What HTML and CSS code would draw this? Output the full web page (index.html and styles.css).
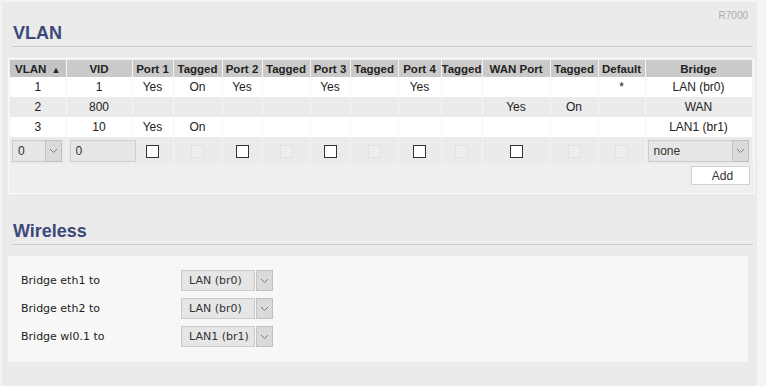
FILE: index.html
```html
<!DOCTYPE html>
<html lang="en">
<head>
    <meta charset="UTF-8">
    <title>VLAN</title>
    <link rel="stylesheet" href="styles.css">
</head>
<body>
    <div class="page">
        <div class="model">R7000</div>

        <h2 class="section-title">VLAN</h2>
        <div class="vlan-box">
            <table class="vlan-table">
                <colgroup>
                    <col style="width:56px"><col style="width:66px"><col style="width:41px"><col style="width:49px">
                    <col style="width:40px"><col style="width:48px"><col style="width:40px"><col style="width:48px">
                    <col style="width:43px"><col style="width:41px"><col style="width:68px"><col style="width:48px">
                    <col style="width:47px"><col style="width:107px">
                </colgroup>
                <thead>
                    <tr>
                        <th class="sorted">VLAN <span class="sort-arrow">&#9650;</span></th>
                        <th>VID</th>
                        <th>Port 1</th>
                        <th>Tagged</th>
                        <th>Port 2</th>
                        <th>Tagged</th>
                        <th>Port 3</th>
                        <th>Tagged</th>
                        <th>Port 4</th>
                        <th>Tagged</th>
                        <th>WAN Port</th>
                        <th>Tagged</th>
                        <th>Default</th>
                        <th>Bridge</th>
                    </tr>
                </thead>
                <tbody>
                    <tr>
                        <td>1</td><td>1</td><td>Yes</td><td>On</td><td>Yes</td><td></td><td>Yes</td><td></td>
                        <td>Yes</td><td></td><td></td><td></td><td>*</td><td>LAN (br0)</td>
                    </tr>
                    <tr class="alt">
                        <td>2</td><td>800</td><td></td><td></td><td></td><td></td><td></td><td></td>
                        <td></td><td></td><td>Yes</td><td>On</td><td></td><td>WAN</td>
                    </tr>
                    <tr>
                        <td>3</td><td>10</td><td>Yes</td><td>On</td><td></td><td></td><td></td><td></td>
                        <td></td><td></td><td></td><td></td><td></td><td>LAN1 (br1)</td>
                    </tr>
                    <tr class="edit-row">
                        <td class="left">
                            <span class="dropdown vlan-select">
                                <span class="dropdown-value">0</span>
                                <span class="dropdown-arrow"><svg width="9" height="6" viewBox="0 0 9 6"><path d="M1 1 L4.5 4.5 L8 1" fill="none" stroke="#7a7a7a" stroke-width="1"/></svg></span>
                            </span>
                        </td>
                        <td class="left"><input class="vid-input" type="text" value="0"></td>
                        <td><input type="checkbox" class="check"></td>
                        <td><input type="checkbox" class="check" disabled></td>
                        <td><input type="checkbox" class="check"></td>
                        <td><input type="checkbox" class="check" disabled></td>
                        <td><input type="checkbox" class="check"></td>
                        <td><input type="checkbox" class="check" disabled></td>
                        <td><input type="checkbox" class="check"></td>
                        <td><input type="checkbox" class="check" disabled></td>
                        <td><input type="checkbox" class="check"></td>
                        <td><input type="checkbox" class="check" disabled></td>
                        <td><input type="checkbox" class="check" disabled></td>
                        <td class="left">
                            <span class="dropdown bridge-select">
                                <span class="dropdown-value">none</span>
                                <span class="dropdown-arrow"><svg width="9" height="6" viewBox="0 0 9 6"><path d="M1 1 L4.5 4.5 L8 1" fill="none" stroke="#7a7a7a" stroke-width="1"/></svg></span>
                            </span>
                        </td>
                    </tr>
                </tbody>
            </table>
            <div class="table-footer">
                <button class="add-btn">Add</button>
            </div>
        </div>

        <h2 class="section-title wireless-title">Wireless</h2>
        <div class="wireless-box">
            <div class="field">
                <label>Bridge eth1 to</label>
                <span class="dropdown wl-select">
                    <span class="dropdown-value">LAN (br0)</span>
                    <span class="dropdown-arrow"><svg width="9" height="6" viewBox="0 0 9 6"><path d="M1 1 L4.5 4.5 L8 1" fill="none" stroke="#7a7a7a" stroke-width="1"/></svg></span>
                </span>
            </div>
            <div class="field">
                <label>Bridge eth2 to</label>
                <span class="dropdown wl-select">
                    <span class="dropdown-value">LAN (br0)</span>
                    <span class="dropdown-arrow"><svg width="9" height="6" viewBox="0 0 9 6"><path d="M1 1 L4.5 4.5 L8 1" fill="none" stroke="#7a7a7a" stroke-width="1"/></svg></span>
                </span>
            </div>
            <div class="field">
                <label>Bridge wl0.1 to</label>
                <span class="dropdown wl-select">
                    <span class="dropdown-value">LAN1 (br1)</span>
                    <span class="dropdown-arrow"><svg width="9" height="6" viewBox="0 0 9 6"><path d="M1 1 L4.5 4.5 L8 1" fill="none" stroke="#7a7a7a" stroke-width="1"/></svg></span>
                </span>
            </div>
        </div>
    </div>
</body>
</html>
```

FILE: styles.css
```css
body {
    margin: 0;
    padding: 0;
    background-color: #f4f4f4;
    font-family: "Liberation Sans", Arial, sans-serif;
    color: #222;
}

.page {
    margin: 2px 9px 0 2px;
    min-height: 384px;
    background-color: #ebebeb;
    overflow: hidden;
}

.model {
    padding: 8px 9px 0 0;
    height: 12px;
    line-height: 12px;
    text-align: right;
    font-size: 10px;
    color: #aaa;
}

.section-title {
    margin: 0 4px 0 10px;
    padding: 0 0 2px 1px;
    height: 22px;
    line-height: 22px;
    font-size: 18px;
    font-weight: bold;
    color: #3d4a78;
    border-bottom: 1px solid #cccccc;
}

.wireless-title {
    margin-top: 26px;
}

/* VLAN table */

.vlan-box {
    margin: 11px 2px 0 6px;
    padding: 1px;
    border: 1px solid #fafafa;
    background-color: #efefef;
}

.vlan-table {
    width: 742px;
    table-layout: fixed;
    border-collapse: collapse;
    font-size: 12px;
}

.vlan-table th {
    height: 17px;
    padding: 0;
    background-color: #cacaca;
    border-right: 1px solid #f4f4f4;
    font-size: 11.5px;
    font-weight: bold;
    color: #222;
    text-align: center;
    white-space: nowrap;
}

.vlan-table th.sorted {
    background-color: #c4c4c4;
}

.sort-arrow {
    font-size: 9px;
    margin-left: 2px;
}

.vlan-table td {
    height: 20px;
    padding: 0;
    border-right: 1px solid #f6f6f6;
    text-align: center;
    background-color: #fff;
}

.vlan-table tr.alt td {
    background-color: #ebebeb;
}

.vlan-table tr.edit-row td {
    height: 27px;
    background-color: #ebebeb;
    border-right: 1px solid #f4f4f4;
}

.vlan-table td.left {
    text-align: left;
    padding-left: 2px;
}

.vid-input {
    box-sizing: border-box;
    width: 66px;
    height: 22px;
    margin: 0 0 0 1px;
    padding: 0 5px;
    border: 1px solid #cfcfcf;
    background-color: #e6e6e6;
    font-family: "Liberation Sans", Arial, sans-serif;
    font-size: 12px;
    color: #333;
    vertical-align: middle;
}

.check {
    appearance: none;
    -webkit-appearance: none;
    box-sizing: border-box;
    width: 13px;
    height: 13px;
    margin: 0;
    border: 1px solid #333;
    background-color: #fff;
    vertical-align: middle;
}

.check:disabled {
    border-color: #e2e2e2;
    background-color: #eeeeee;
}

.table-footer {
    height: 28px;
    display: flex;
    justify-content: flex-end;
    align-items: flex-start;
    padding: 2px 3px 0 0;
    box-sizing: border-box;
}

.add-btn {
    width: 59px;
    height: 19px;
    padding: 0 0 0 4px;
    border: 1px solid #d2d2d2;
    background-color: #fff;
    font-family: "Liberation Sans", Arial, sans-serif;
    font-size: 12px;
    color: #333;
    text-align: center;
}

/* dropdowns */

.dropdown {
    display: inline-flex;
    height: 22px;
    vertical-align: middle;
    box-sizing: border-box;
}

.dropdown-value {
    flex: 1;
    display: flex;
    align-items: center;
    padding-left: 5px;
    border: 1px solid #cbcbcb;
    background-color: #e6e6e6;
    color: #333;
}

.dropdown-arrow {
    width: 15px;
    display: flex;
    align-items: center;
    justify-content: center;
    border: 1px solid #bfbfbf;
    border-left-color: #c4c4c4;
    background-color: #dadada;
}

.vlan-select {
    width: 50px;
}

.vlan-select .dropdown-value {
    border-right: none;
}

.bridge-select {
    width: 101px;
}

.bridge-select .dropdown-value {
    border-right: none;
}

/* Wireless */

.wireless-box {
    width: 727px;
    margin: 11px 0 0 6px;
    padding: 14px 0 15px 13px;
    background-color: #f7f7f7;
}

.field {
    display: flex;
    align-items: center;
    height: 21px;
    margin-bottom: 7px;
    font-family: "DejaVu Sans", Verdana, sans-serif;
    font-size: 11px;
}

.field:last-child {
    margin-bottom: 0;
}

.field label {
    width: 160px;
    color: #222;
}

.wl-select {
    width: 92px;
    height: 21px;
}

.wl-select .dropdown-value {
    padding-left: 7px;
    font-size: 11px;
}

.wl-select .dropdown-arrow {
    margin-left: 1px;
}
```
